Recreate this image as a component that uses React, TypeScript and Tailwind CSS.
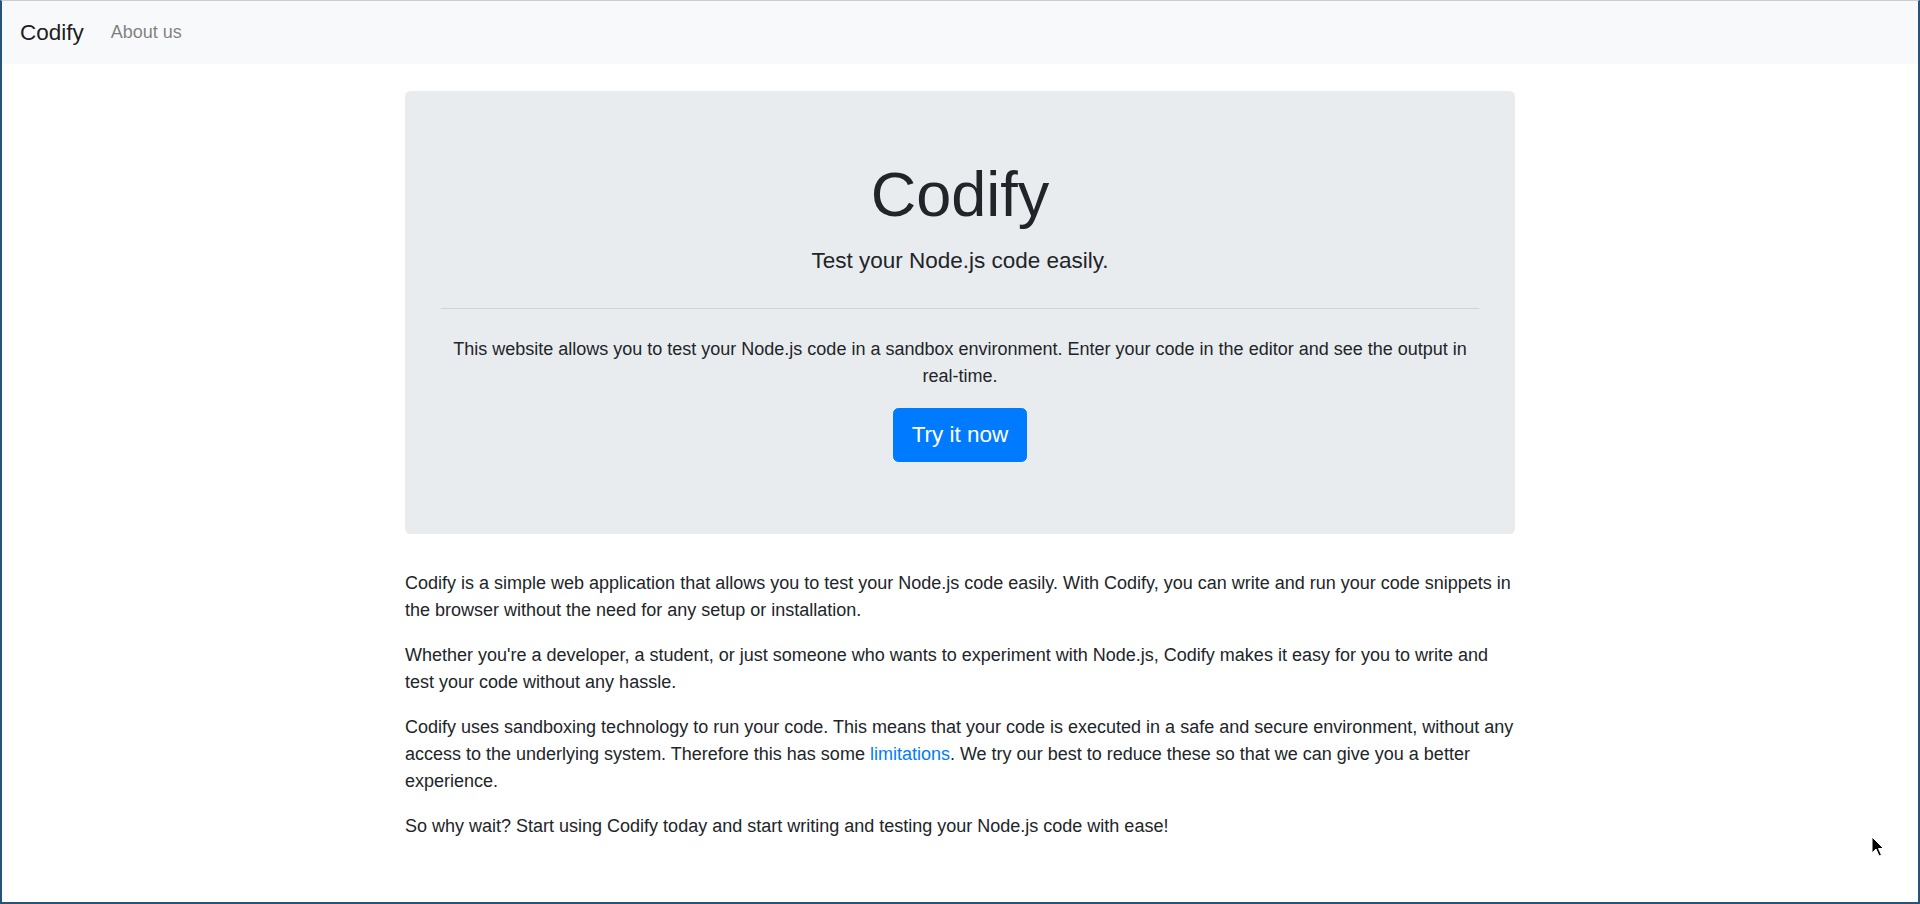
const font = { fontFamily: '"Liberation Sans", Arial, sans-serif' };

function Cursor() {
  return (
    <svg
      className="pointer-events-none absolute left-[1869px] top-[835px]"
      width="14"
      height="22"
      viewBox="0 0 14 22"
      aria-hidden="true"
    >
      <path
        d="M1 1 L1 17 L5 13 L8 20 L10.5 19 L7.5 12.5 L12.5 12.5 Z"
        fill="#000"
        stroke="#fff"
        strokeWidth="1"
        strokeLinejoin="round"
      />
    </svg>
  );
}

export default function App() {
  return (
    <div
      style={font}
      className="relative flex h-[904px] flex-col overflow-hidden border-x-2 border-b-2 border-t border-x-[#25537a] border-b-[#25537a] border-t-[#cfcccc] bg-white text-[#212529]"
    >
      {/* navbar */}
      <nav className="flex items-center bg-[#f8f9fa] px-[18px] py-[9px]">
        <a href="#" className="mr-[18px] py-[5.625px] text-[22.5px] leading-[33.75px] text-black/90">
          Codify
        </a>
        <a href="#" className="px-[9px] py-[9px] text-[18px] leading-[27px] text-black/50">
          About us
        </a>
      </nav>

      <main className="mx-auto mt-[27px] w-full max-w-[1140px] px-[15px]">
        <section className="mb-[36px] rounded-[5.4px] bg-[#e9ecef] px-[36px] py-[72px] text-center">
          <h1 className="mb-[19px] text-[63px] font-light leading-[62px]">Codify</h1>
          <p className="text-[22.5px] font-light leading-[33.75px]">Test your Node.js code easily.</p>
          <hr className="mb-[27px] mt-[30.5px] border-t border-black/10" />
          <p className="mb-[18px] text-[18px] leading-[27px]">
            This website allows you to test your Node.js code in a sandbox environment. Enter your code in the
            editor and see the output in real-time.
          </p>
          <a
            href="#"
            className="inline-block rounded-[5.4px] border border-[#007bff] bg-[#007bff] px-[18px] py-[9px] text-[22.5px] leading-[33.75px] text-white"
          >
            Try it now
          </a>
        </section>

        <div className="flex flex-col gap-[18px] text-[18px] leading-[27px]">
          <p>
            Codify is a simple web application that allows you to test your Node.js code easily. With Codify, you
            can write and run your code snippets in the browser without the need for any setup or installation.
          </p>
          <p>
            Whether you're a developer, a student, or just someone who wants to experiment with Node.js, Codify
            makes it easy for you to write and test your code without any hassle.
          </p>
          <p>
            Codify uses sandboxing technology to run your code. This means that your code is executed in a safe and
            secure environment, without any access to the underlying system. Therefore this has some{" "}
            <a href="#" className="text-[#007bff]">
              limitations
            </a>
            . We try our best to reduce these so that we can give you a better experience.
          </p>
          <p>So why wait? Start using Codify today and start writing and testing your Node.js code with ease!</p>
        </div>
      </main>

      <Cursor />
    </div>
  );
}
